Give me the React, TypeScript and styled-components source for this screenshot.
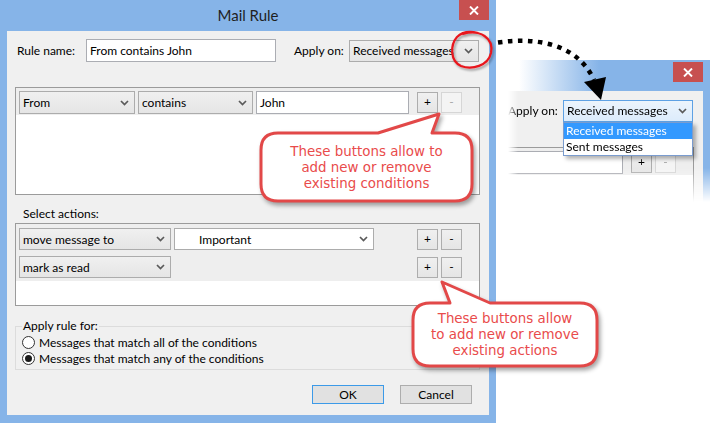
import React from "react";
import styled, { createGlobalStyle } from "styled-components";

const GlobalStyle = createGlobalStyle`
  html, body { margin: 0; padding: 0; background: #fff; }
  body {
    width: 712px; height: 423px; overflow: hidden;
    font-family: Lato, "Noto Sans", sans-serif;
  }
  * { box-sizing: border-box; }
`;

const UI_FONT = `Lato, "Noto Sans", sans-serif`;
const NOTE_FONT = `"DejaVu Sans", Verdana, sans-serif`;
const FRAME_BLUE = "#86b4e8";

const Stage = styled.div`
  position: relative;
  width: 712px;
  height: 423px;
  display: flex;
  align-items: flex-start;
  background: #fff;
  overflow: hidden;
`;

const Window = styled.div<{ $inset?: boolean }>`
  flex: none;
  width: 496px;
  height: 423px;
  margin-left: ${(p) => (p.$inset ? "-282px" : "0")};
  background: ${FRAME_BLUE};
  display: flex;
  flex-direction: column;
  font-family: ${UI_FONT};
  font-size: 12px;
  color: #000;
`;

const TitleBar = styled.div<{ $faded?: boolean }>`
  height: 31px;
  flex: none;
  padding: 0 7px;
  display: grid;
  grid-template-columns: 1fr auto 1fr;
  align-items: center;
  background: ${(p) =>
    p.$faded
      ? `linear-gradient(90deg, #ffffff 0, #ffffff 305px, ${FRAME_BLUE} 385px)`
      : FRAME_BLUE};
`;

const Title = styled.div`
  font-size: 15px;
  color: #1f1f1f;
  line-height: 31px;
  padding-bottom: 1px;
`;

const CloseButton = styled.div<{ $drop?: boolean }>`
  justify-self: end;
  align-self: start;
  margin-top: ${(p) => (p.$drop ? "2px" : "0")};
  width: 30px;
  height: 20px;
  background: #c75050;
  display: flex;
  align-items: center;
  justify-content: center;
`;

const Client = styled.div`
  flex: 1;
  margin: 0 7px 8px;
  background: #f0f0f0;
  padding: 8px 9px 11px 8px;
  display: flex;
  flex-direction: column;
`;

const TopRow = styled.div`
  display: flex;
  align-items: center;
  height: 23px;
`;

const RowLabel = styled.span<{ $w: number; $ml?: number }>`
  flex: none;
  width: ${(p) => p.$w}px;
  margin-left: ${(p) => p.$ml ?? 0}px;
  padding-left: 2px;
  white-space: nowrap;
`;

const TextBox = styled.div<{ $w: number; $h: number }>`
  flex: none;
  width: ${(p) => p.$w}px;
  height: ${(p) => p.$h}px;
  border: 1px solid #abadb3;
  background: #fff;
  padding: 0 3px;
  display: flex;
  align-items: center;
  white-space: nowrap;
  overflow: hidden;
`;

const SelectBox = styled.div<{
  $w: number;
  $h: number;
  $focus?: boolean;
  $white?: boolean;
  $indent?: number;
}>`
  position: relative;
  flex: none;
  width: ${(p) => p.$w}px;
  height: ${(p) => p.$h}px;
  padding: 0 5px 0 ${(p) => p.$indent ?? 3}px;
  display: flex;
  align-items: center;
  border: 1px solid ${(p) => (p.$focus ? "#5ea1e4" : "#acacac")};
  background: ${(p) =>
    p.$focus
      ? "linear-gradient(#ecf4fc, #dcecfc)"
      : p.$white
      ? "#ffffff"
      : "linear-gradient(#f0f0f0, #e5e5e5)"};
`;

const SelectText = styled.span`
  flex: 1;
  white-space: nowrap;
  overflow: hidden;
`;

const DropList = styled.ul`
  position: absolute;
  left: -1px;
  top: calc(100% + 1px);
  width: calc(100% + 2px);
  margin: 0;
  padding: 0;
  list-style: none;
  background: #fff;
  border: 1px solid #7a9ccf;
  box-shadow: 3px 3px 4px rgba(0, 0, 0, 0.3);
  z-index: 5;
`;

const DropItem = styled.li<{ $active?: boolean }>`
  height: 16px;
  line-height: 15px;
  padding-left: 2px;
  background: ${(p) => (p.$active ? "#3399ff" : "#fff")};
  color: ${(p) => (p.$active ? "#fff" : "#000")};
  white-space: nowrap;
`;

const Frame = styled.div<{ $h: number; $mt: number }>`
  flex: none;
  height: ${(p) => p.$h}px;
  margin-top: ${(p) => p.$mt}px;
  border: 1px solid #9b9b9b;
  background: #fff;
`;

const Band = styled.div<{ $pad: string }>`
  background: #eeeeee;
  padding: ${(p) => p.$pad};
  display: flex;
  flex-direction: column;
  gap: 6px;
`;

const RuleRow = styled.div`
  display: flex;
  align-items: center;
  gap: 3px;
`;

const ButtonPair = styled.div`
  margin-left: auto;
  display: flex;
  gap: 3px;
`;

const SmallButton = styled.div<{ $disabled?: boolean }>`
  width: 21px;
  height: 21px;
  border: 1px solid ${(p) => (p.$disabled ? "#d6d6d6" : "#adadad")};
  background: ${(p) =>
    p.$disabled ? "#f4f4f4" : "linear-gradient(#f0f0f0, #e5e5e5)"};
  color: ${(p) => (p.$disabled ? "#a8a8a8" : "#000")};
  display: flex;
  align-items: center;
  justify-content: center;
  font-size: 12px;
  line-height: 1;
  padding-bottom: 1px;
`;

const SectionLabel = styled.div`
  margin: 11px 0 1px 8px;
  line-height: 16px;
`;

const Group = styled.fieldset`
  margin: 12px 0 0;
  padding: 0 6px 3px;
  border: 1px solid #dcdcdc;
  min-width: 0;
`;

const Legend = styled.legend`
  padding: 0 1px;
  line-height: 16px;
`;

const RadioRow = styled.div`
  height: 16px;
  display: flex;
  align-items: center;
  gap: 4px;
  white-space: nowrap;
`;

const RadioDot = styled.span<{ $checked?: boolean }>`
  flex: none;
  width: 13px;
  height: 13px;
  border-radius: 50%;
  border: 1px solid #333;
  background: #fff;
  display: flex;
  align-items: center;
  justify-content: center;
  &::after {
    content: "";
    width: 7px;
    height: 7px;
    border-radius: 50%;
    background: ${(p) => (p.$checked ? "#1a1a1a" : "transparent")};
  }
`;

const ButtonRow = styled.div`
  margin-top: auto;
  display: flex;
  justify-content: flex-end;
  gap: 16px;
  padding-right: 8px;
`;

const DialogButton = styled.div<{ $default?: boolean }>`
  width: 72px;
  height: 19px;
  border: 1px solid ${(p) => (p.$default ? "#3c9ae8" : "#adadad")};
  background: #e1e1e1;
  display: flex;
  align-items: center;
  justify-content: center;
  padding-bottom: 1px;
`;

/* ---------- inset crop ---------- */

const InsetCrop = styled.div`
  flex: none;
  width: 216px;
  height: 145px;
  margin-top: 60px;
  overflow: hidden;
  display: flex;
  -webkit-mask-image: linear-gradient(90deg, transparent 0, transparent 12px, #000 22px),
    linear-gradient(180deg, #000 108px, transparent 142px);
  -webkit-mask-composite: source-in;
  mask-image: linear-gradient(90deg, transparent 0, transparent 12px, #000 22px),
    linear-gradient(180deg, #000 108px, transparent 142px);
  mask-composite: intersect;
`;

/* ---------- annotations ---------- */

const Overlay = styled.svg`
  position: absolute;
  left: 0;
  top: 0;
  width: 712px;
  height: 423px;
  pointer-events: none;
  overflow: visible;
  z-index: 10;
`;

const CalloutBox = styled.div<{ $x: number; $y: number; $w: number; $h: number }>`
  position: absolute;
  left: ${(p) => p.$x}px;
  top: ${(p) => p.$y}px;
  width: ${(p) => p.$w}px;
  height: ${(p) => p.$h}px;
  display: flex;
  align-items: center;
  justify-content: center;
  z-index: 11;
`;

const CalloutShape = styled.svg`
  position: absolute;
  left: 0;
  top: 0;
  overflow: visible;
  filter: drop-shadow(2px 3px 2px rgba(0, 0, 0, 0.35));
`;

const CalloutText = styled.div`
  position: relative;
  font-family: ${NOTE_FONT};
  font-size: 13.4px;
  line-height: 16px;
  color: #e94b4b;
  text-align: center;
  padding-top: 1px;
`;

type CalloutProps = {
  x: number;
  y: number;
  w: number;
  h: number;
  b1: number;
  b2: number;
  tx: number;
  ty: number;
  lines: string[];
};

function Callout({ x, y, w, h, b1, b2, tx, ty, lines }: CalloutProps) {
  const r = 17;
  const d = `M ${r} 0 L ${b1} 0 L ${tx} ${ty} L ${b2} 0 L ${w - r} 0 Q ${w} 0 ${w} ${r} L ${w} ${
    h - r
  } Q ${w} ${h} ${w - r} ${h} L ${r} ${h} Q 0 ${h} 0 ${h - r} L 0 ${r} Q 0 0 ${r} 0 Z`;
  return (
    <CalloutBox $x={x} $y={y} $w={w} $h={h}>
      <CalloutShape width={w} height={h}>
        <path d={d} fill="#fff" stroke="#e24848" strokeWidth={3} strokeLinejoin="round" />
      </CalloutShape>
      <CalloutText>
        {lines.map((l) => (
          <div key={l}>{l}</div>
        ))}
      </CalloutText>
    </CalloutBox>
  );
}

function Chevron() {
  return (
    <svg width="9" height="6" viewBox="0 0 9 6">
      <path d="M1 1 L4.5 4.5 L8 1" fill="none" stroke="#5a5a5a" strokeWidth="1.7" />
    </svg>
  );
}

function CloseIcon() {
  return (
    <svg width="10" height="9" viewBox="0 0 10 9">
      <path d="M1 0.5 L9 8.5 M9 0.5 L1 8.5" stroke="#fff" strokeWidth="1.9" />
    </svg>
  );
}

function MailRuleDialog({ inset }: { inset?: boolean }) {
  return (
    <Window $inset={inset}>
      <TitleBar $faded={inset}>
        <span />
        <Title>Mail Rule</Title>
        <CloseButton $drop={inset}>
          <CloseIcon />
        </CloseButton>
      </TitleBar>
      <Client>
        <TopRow>
          <RowLabel $w={71}>Rule name:</RowLabel>
          <TextBox $w={190} $h={23}>
            From contains John
          </TextBox>
          <RowLabel $w={57} $ml={16}>
            Apply on:
          </RowLabel>
          <SelectBox $w={130} $h={22} $focus={inset}>
            <SelectText>Received messages</SelectText>
            <Chevron />
            {inset && (
              <DropList>
                <DropItem $active>Received messages</DropItem>
                <DropItem>Sent messages</DropItem>
              </DropList>
            )}
          </SelectBox>
        </TopRow>

        <Frame $h={108} $mt={25}>
          <Band $pad="3px 17px 1px 3px">
            <RuleRow>
              <SelectBox $w={116} $h={23}>
                <SelectText>From</SelectText>
                <Chevron />
              </SelectBox>
              <SelectBox $w={115} $h={23}>
                <SelectText>contains</SelectText>
                <Chevron />
              </SelectBox>
              <TextBox $w={153} $h={23}>
                John
              </TextBox>
              <ButtonPair>
                <SmallButton>+</SmallButton>
                <SmallButton $disabled>-</SmallButton>
              </ButtonPair>
            </RuleRow>
          </Band>
        </Frame>

        <SectionLabel>Select actions:</SectionLabel>
        <Frame $h={83} $mt={0}>
          <Band $pad="4px 17px 3px 3px">
            <RuleRow>
              <SelectBox $w={152} $h={22}>
                <SelectText>move message to</SelectText>
                <Chevron />
              </SelectBox>
              <SelectBox $w={200} $h={22} $white $indent={24}>
                <SelectText>Important</SelectText>
                <Chevron />
              </SelectBox>
              <ButtonPair>
                <SmallButton>+</SmallButton>
                <SmallButton>-</SmallButton>
              </ButtonPair>
            </RuleRow>
            <RuleRow>
              <SelectBox $w={152} $h={22}>
                <SelectText>mark as read</SelectText>
                <Chevron />
              </SelectBox>
              <ButtonPair>
                <SmallButton>+</SmallButton>
                <SmallButton>-</SmallButton>
              </ButtonPair>
            </RuleRow>
          </Band>
        </Frame>

        <Group>
          <Legend>Apply rule for:</Legend>
          <RadioRow>
            <RadioDot />
            Messages that match all of the conditions
          </RadioRow>
          <RadioRow>
            <RadioDot $checked />
            Messages that match any of the conditions
          </RadioRow>
        </Group>

        <ButtonRow>
          <DialogButton $default>OK</DialogButton>
          <DialogButton>Cancel</DialogButton>
        </ButtonRow>
      </Client>
    </Window>
  );
}

export default function App() {
  return (
    <>
      <GlobalStyle />
      <Stage>
        <MailRuleDialog />
        <InsetCrop>
          <MailRuleDialog inset />
        </InsetCrop>

        <Overlay viewBox="0 0 712 423">
          <defs>
            <filter id="soft" x="-20%" y="-20%" width="140%" height="140%">
              <feDropShadow dx="1.5" dy="2" stdDeviation="1.2" floodColor="#000" floodOpacity="0.35" />
            </filter>
          </defs>
          <path
            d="M 463 34 C 480 29, 494 38, 491 53 C 488 66, 472 70, 461 66 C 450 61, 450 45, 457 37 C 462 32, 470 31, 478 33"
            fill="none"
            stroke="#e8161e"
            strokeWidth="2.2"
            strokeLinecap="round"
            filter="url(#soft)"
          />
          <path
            d="M 498 42.5 C 535 37, 577 43, 594 80"
            fill="none"
            stroke="#000"
            strokeWidth="4.5"
            strokeDasharray="4.5 5.5"
          />
          <polygon points="584,82 606,77 601,100" fill="#000" />
        </Overlay>

        <Callout
          x={261}
          y={133}
          w={211}
          h={68}
          b1={117}
          b2={171}
          tx={178}
          ty={-19}
          lines={["These buttons allow to", "add new or remove", "existing conditions"]}
        />
        <Callout
          x={413}
          y={303}
          w={184}
          h={63}
          b1={37}
          b2={77}
          tx={29}
          ty={-21}
          lines={["These buttons allow", "to add new or remove", "existing actions"]}
        />
      </Stage>
    </>
  );
}
